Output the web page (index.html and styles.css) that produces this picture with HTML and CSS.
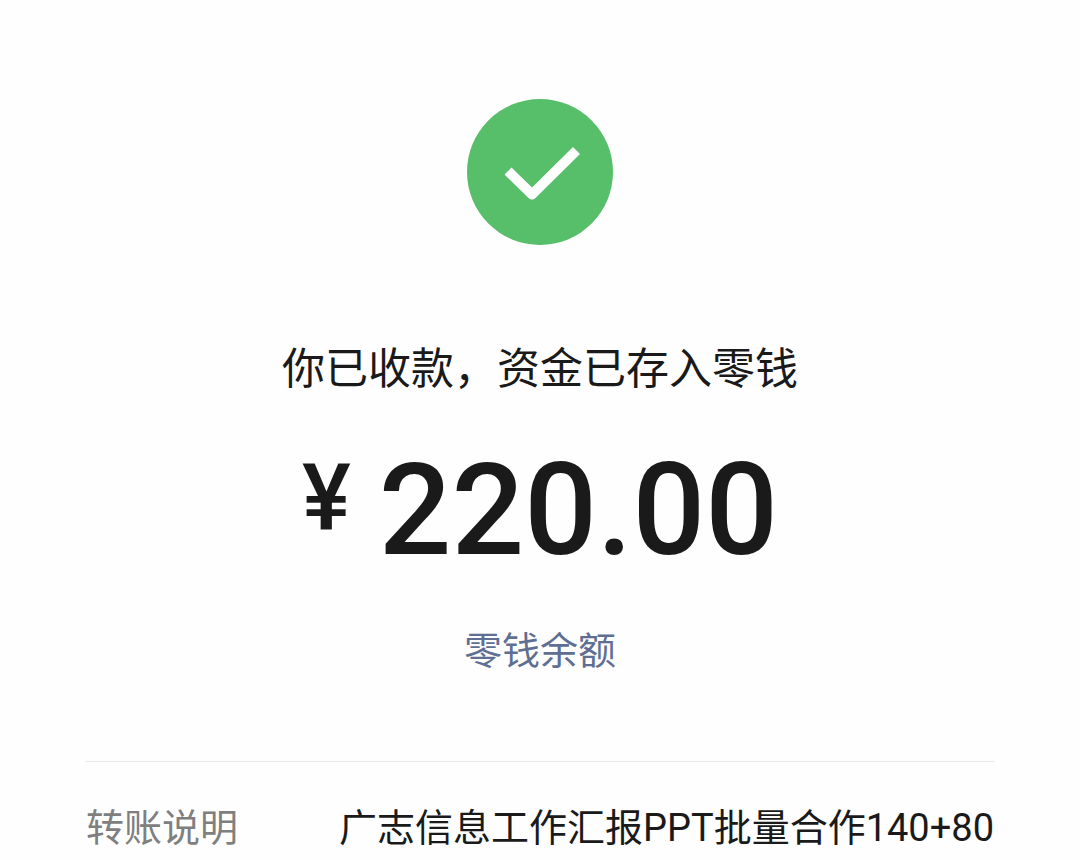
FILE: index.html
```html
<!DOCTYPE html>
<html lang="zh-CN">
<head>
    <meta charset="UTF-8">
    <meta name="viewport" content="width=device-width, initial-scale=1">
    <title>零钱</title>
    <link rel="stylesheet" href="styles.css">
</head>
<body>
    <main class="receipt">
        <svg class="status-icon" viewBox="0 0 146 146" aria-hidden="true">
            <circle cx="73" cy="73" r="73" fill="#57be6a"/>
            <path d="M37.5 75.5 L44.5 68.5 L65 88.5 L106 48 L113 55 L68.5 99 Q65 102 61.5 99 Z" fill="#fff"/>
        </svg>
        <h1 class="status">你已收款，资金已存入零钱</h1>
        <div class="amount">
            <span class="currency">¥</span>
            <span class="value">220.00</span>
        </div>
        <a href="#" class="balance-link">零钱余额</a>
        <dl class="details">
            <dt>转账说明</dt>
            <dd>广志信息工作汇报PPT批量合作140+80</dd>
        </dl>
    </main>
</body>
</html>
```

FILE: styles.css
```css
* {
    box-sizing: border-box;
}

body {
    margin: 0;
    background-color: #fefefe;
    color: #1a1a1a;
    font-family: Roboto, 'Noto Sans CJK SC', sans-serif;
}

.receipt {
    display: flex;
    flex-direction: column;
    align-items: center;
    padding: 99px 86px 0;
}

.status-icon {
    width: 146px;
    height: 146px;
}

.status {
    margin: 94px 0 0;
    font-size: 43px;
    font-weight: 400;
    line-height: 60px;
}

.amount {
    display: flex;
    align-items: flex-start;
    gap: 28px;
    margin-top: 40px;
    font-weight: 500;
}

.currency {
    font-size: 92px;
    line-height: 120px;
}

.value {
    font-size: 128px;
    line-height: 142px;
}

.balance-link {
    margin-top: 42px;
    color: #5f6f94;
    font-size: 38px;
    line-height: 56px;
    text-decoration: none;
}

.details {
    display: flex;
    justify-content: space-between;
    align-self: stretch;
    margin: 82px 0 0;
    padding-top: 38px;
    border-top: 1px solid #e8e8e8;
    font-size: 38px;
    line-height: 56px;
}

.details dt {
    color: #7f7f7f;
}

.details dd {
    margin: 0;
}
```
